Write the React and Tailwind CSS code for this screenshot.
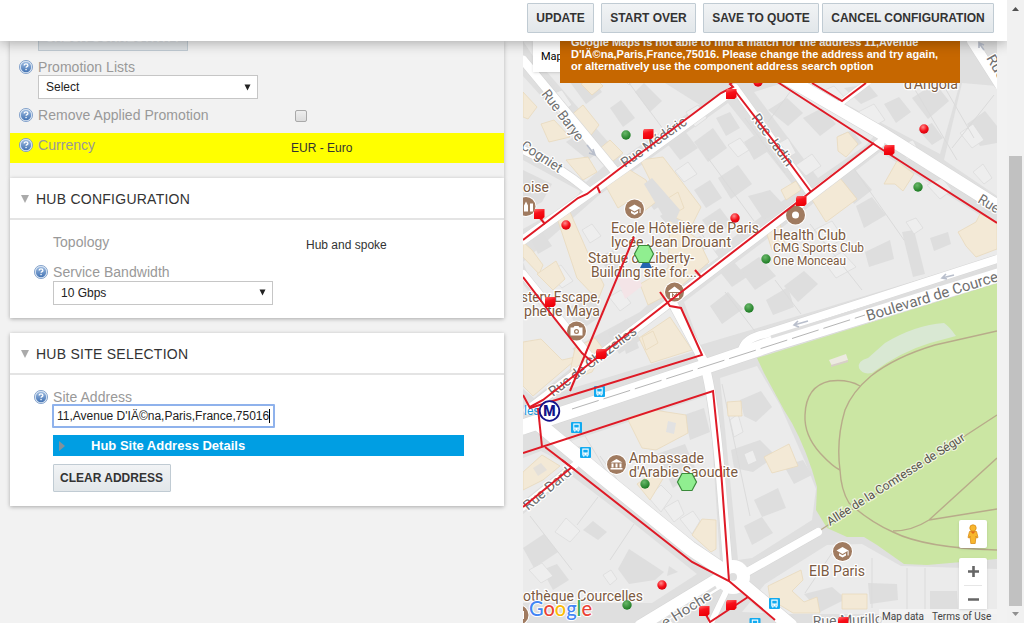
import React from "react";

/* ---------- form pieces ---------- */

function Help({ className = "" }) {
  return (
    <svg viewBox="0 0 14 14" className={"h-[14px] w-[14px] shrink-0 " + className}>
      <defs>
        <linearGradient id="help" x1="0" y1="0" x2="0" y2="1">
          <stop offset="0" stopColor="#9dbbe0" />
          <stop offset="1" stopColor="#4373b4" />
        </linearGradient>
      </defs>
      <circle cx="7" cy="7" r="6.6" fill="#dbe6f3" stroke="#7396c4" strokeWidth="0.8" />
      <circle cx="7" cy="7" r="5.200" fill="url(#help)" />
      <path d="M5.200 5.600C5.200 4.400 6 3.900 7 3.900s1.900 .5 1.900 1.500c0 1.200-1.800 1.200-1.800 2.400" fill="none" stroke="#fff" strokeWidth="1.300" />
      <rect x="6.400" y="8.900" width="1.300" height="1.300" fill="#fff" />
    </svg>
  );
}

function Select({ value, className = "" }) {
  return (
    <div className={"flex h-6 w-[220px] items-center justify-between border border-[#c6c6c6] bg-white pl-[7px] pr-[6px] text-[12px] text-[#222] " + className}>
      <span>{value}</span>
      <svg viewBox="0 0 7 7" className="h-[7px] w-[7px]">
        <path d="M0.500 0.500h6L3.500 6.500z" fill="#222" />
      </svg>
    </div>
  );
}

function Button({ children, className = "" }) {
  return (
    <button className={"flex shrink-0 items-center justify-center whitespace-nowrap rounded-[1px] border border-[#c0cbd3] bg-linear-to-b from-[#f1f3f5] to-[#e2e7ea] text-[12px] font-bold text-[#333] " + className}>
      {children}
    </button>
  );
}

function Card({ title, className = "", children }) {
  return (
    <section className={"bg-white shadow-[0_1px_4px_rgba(0,0,0,0.3)] " + className}>
      <h2 className="flex h-[42px] items-center gap-[7px] border-b-2 border-[#e4e4e4] pl-[11px] pt-[2px] text-[14px] tracking-[0.25px] text-[#333]">
        <svg viewBox="0 0 8 8" className="h-2 w-2">
          <path d="M0 0h8L4 8z" fill="#aaa" />
        </svg>
        {title}
      </h2>
      {children}
    </section>
  );
}

/* ---------- map data ---------- */

const blocks = [
  "523,76 604,166 586,182 560,164 523,142", "523,41 598,41 700,105 622,158 533,56",
  "523,160 580,191 576,200 523,229", "598,196 728,103 797,190 668,286 640,312 560,355 523,262",
  "754,92 783,83 874,136 866,145 818,178", "806,83 960,83 940,154", "962,83 997,86 997,196 944,160",
  "880,152 997,226 997,256 818,310 700,345 684,302 801,213",
  "523,284 581,360 534,398 523,389", "602,356 668,306 698,350 553,394",
  "565,443 706,396 712,440 720,560 580,460", "523,458 541,451 568,465 523,501",
  "523,514 572,476 622,514 697,574 652,603 523,603", "720,378 757,366 780,405 806,464 816,489 812,520 752,558 738,560",
  "742,612 765,584 827,545 862,544 901,566 997,569 997,614 790,614",
];

const facets = [
  "534,86 548,78 566,98 552,108", "567,78 584,67 602,92 586,104",
  "566,142 584,130 602,150 588,160", "523,170 552,184 542,202 523,212",
  "610,108 621,100 635,118 623,127", "635,92 644,83 662,101 650,112", "640,190 660,176 674,196 654,210",
  "694,142 713,128 727,148 708,162", "718,178 738,165 752,184 731,199", "748,196 770,190 786,207 764,220",
  "660,216 678,204 690,220 673,232", "694,190 710,180 722,198 706,208", "702,220 720,208 732,224 714,236",
  "666,142 684,130 698,148 680,160", "744,142 758,133 770,150 754,160", "716,118 730,112 740,128 726,136",
  "768,110 787,98 803,113 788,126", "803,118 822,108 836,124 820,136", "838,136 852,130 862,143 848,152",
  "844,88 868,84 878,96 861,104", "884,104 899,97 911,112 896,123", "912,98 935,83 949,101 928,119",
  "967,124 985,111 997,126 997,143 980,146", "918,130 932,123 943,138 932,145",
  "838,178 855,170 872,190 854,204", "856,206 872,197 886,215 864,228", "902,232 914,230 925,274 913,277",
  "930,238 948,232 951,244 934,251", "865,252 890,240 894,259 869,267", "784,286 804,271 818,284 798,302",
  "740,270 759,257 776,276 755,290", "766,300 788,287 794,307 773,315", "710,306 728,292 743,309 722,324",
  "720,272 734,262 747,277 732,287", "608,333 626,319 641,340 619,354", "623,342 636,339 639,348 626,354",
  "529,236 540,228 552,246 538,254", "570,252 583,246 594,264 580,272", "526,354 541,341 554,358 536,370",
  "568,308 590,296 604,314 578,332", "600,256 613,250 621,270 610,278", "682,246 700,236 712,252 692,264",
  "567,450 580,446 582,452 574,458", "657,454 685,444 697,472 673,488", "684,415 704,408 710,432 690,440",
  "618,569 629,549 664,572 655,580 629,584", "583,530 593,521 607,532 598,540", "523,548 544,534 558,552 534,568",
  "542,570 557,564 569,580 553,590", "669,566 678,572 667,576",
  "740,400 761,391 772,407 756,422 744,416", "731,450 760,440 776,456 753,472 734,468", "754,500 778,488 786,508 762,517",
  "744,526 762,517 773,533 752,545", "784,466 803,460 812,475 794,484", "804,594 832,587 846,599 820,612",
  "868,583 897,584 898,600 870,604", "930,591 957,591 958,609 930,609",
];

const pale = [
  "546,96 562,90 572,105 558,114", "618,74 628,68 637,78 629,85", "686,112 698,105 707,118 695,127",
  "728,145 740,138 749,150 738,157", "774,146 788,138 796,153 784,160", "796,165 812,154 821,166 806,176",
  "820,92 834,86 845,98 832,104", "858,112 874,104 885,120 871,128", "897,146 913,140 920,153 908,160",
  "927,185 942,178 952,190 940,199", "906,222 916,218 923,228 914,234",
  "960,133 973,124 984,140 972,148", "973,172 983,164 992,178 984,184", "814,230 832,221 844,239 827,247",
  "824,262 842,252 856,267 836,278", "548,272 561,265 573,281 562,288", "582,230 592,224 601,236 590,243",
  "609,297 621,290 631,303 620,311", "700,252 711,246 719,257 708,265", "675,171 688,162 697,174 684,182",
  "555,532 566,518 580,531 570,542", "529,570 542,563 553,576 541,583",
  "603,575 611,570 617,579 610,585", "648,497 661,485 672,496 661,512", "664,508 678,500 684,514 674,522",
  "680,519 693,511 700,521 692,534", "730,420 738,414 743,432 734,437", "744,454 753,450 757,461 748,465",
];

const cream = [
  "523,92 537,107 528,119 523,117", "541,124 554,120 570,137 549,142", "568,118 583,105 599,125 588,139",
  "598,150 610,140 623,153 607,166", "581,84 593,76 603,86 592,95", "566,160 588,157 597,172 583,180",
  "604,183 625,167 646,180 656,202 643,212 632,199 618,208", "640,160 663,157 701,207 692,225 676,218 650,180",
  "670,220 698,239 709,262 675,291 648,305 640,284 668,268", "557,218 570,212 587,251 604,285 598,300 577,278",
  "523,242 532,250 543,265 539,274 523,257", "537,274 556,261 565,279 553,290", "523,342 541,339 562,360 580,356 533,396 523,386",
  "575,348 595,338 604,350 592,372 568,381", "639,338 670,317 692,350 651,363", "642,337 653,331 658,343 646,350",
  "811,198 840,178 857,199 826,222", "884,184 897,161 914,174 903,191 895,184", "837,137 848,132 858,144 846,157 838,151",
  "958,232 976,222 980,214 997,222 997,249 976,257 966,246",
  "765,228 779,220 785,244 772,250", "781,190 796,181 801,190 786,200", "627,418 654,410 686,415 688,433 656,450 642,448",
  "727,402 741,401 742,416 728,416", "523,472 542,455 560,466 543,480 523,490", "637,484 656,470 664,477 650,500",
  "692,535 702,519 716,520 716,549 711,552", "764,457 789,444 798,466 772,473", "768,586 801,570 803,580 792,591 804,602 817,597 820,613 793,613 770,599",
  "842,594 867,594 867,609 842,609", "665,200 678,192 684,208 672,215",
];

const roads = [
  ["M523 60L614 170", 9], ["M523 150Q556 164 590 192", 8], ["M523 240L632 163L733 90", 9], ["M735 88L811 194", 8],
  ["M528 410L880 143", 9], ["M745 54L831 104L881 133L997 206", 13], ["M842 102L868 82", 6], ["M972 41L1000 85", 10],
  ["M523 274L594 362", 8], ["M523 427L707 366L775 343L997 275", 15], ["M742 350Q745 338 765 334L997 259", 8],
  ["M672 302L704 362Q714 400 720 470L729 580", 9], ["M540 425L594 470L690 548L733 577L790 625", 14],
  ["M523 507L575 465", 7], ["M642 627L728 575", 16], ["M740 576L818 532", 8], ["M733 577L710 625", 6],
];

const red = [
  "523,240 578,198 587,194 618,170 721,93 733,87 730,84 735,80", "597,186 600,193", "740,60 779,83 914,170 997,223",
  "735,91 775,143 811,192", "812,83 842,101 866,83", "530,407 543,400 658,310 874,143", "634,237 570,391",
  "523,277 548,310 582,353 592,362", "523,395 530,408 702,355 681,308 670,306 660,292", "695,270 701,277",
  "538,408 542,447", "523,453 713,391 721,470 729,581", "545,447 575,470", "562,460 692,562 729,581 775,620",
  "523,507 572,467", "748,597 710,622 705,613", "540,218 545,224", "800,201 804,199",
];

const greenDots = [[626, 135], [918, 187], [766, 259], [749, 308], [645, 484], [627, 605]];
const redDots = [[566, 225], [735, 218], [924, 129], [662, 585], [758, 82]];
const redSquares = [[648, 134], [731, 94], [539, 214], [550, 302], [601, 354], [801, 201], [889, 150], [704, 611], [731, 605], [843, 622]];

const labels = [
  [523, 192, "oise", 26, 14],
  [611, 233, "Ecole Hôtelière de Paris", 148, 14], [611, 247, "lycée Jean Drouant", 120, 14],
  [588, 263, "Statue of Liberty-", 106, 14], [591, 277, "Building site for...", 106, 14],
  [521, 302, "stery Escape,", 79, 14], [524, 316, "phetie Maya", 76, 14],
  [773, 240, "Health Club", 73, 14], [773, 252, "CMG Sports Club", 91, 12], [773, 265, "One Monceau", 73, 12],
  [629, 463, "Ambassade", 75, 14], [629, 477, "d'Arabie Saoudite", 109, 14],
  [809, 576, "EIB Paris", 56, 14], [523, 601, "othèque Courcelles", 120, 14], [904, 89, "d'Angola", 54, 14],
];

const streets = [
  [541, 94, "Rue Barye", 60, 14, 53], [520, 148, "Cogniet", 46, 14, 33], [625, 168, "Rue Médéric", 77, 14, -35],
  [751, 118, "Rue Jadin", 61, 14, 54], [553, 397, "Rue de Chazelles", 106, 14, -37], [977, 202, "Rue de", 40, 14, 31],
  [868, 321, "Boulevard de Cource", 137, 15, -17], [986, 58, "Rue", 26, 14, 60], [528, 511, "Rue Dard", 58, 14, -40],
  [665, 628, "e Hoche", 56, 14, -32], [813, 626, "Rue Murillo", 70, 14, -2],
];

function Poi({ x, y, children }) {
  return (
    <g transform={`translate(${x} ${y})`}>
      <circle r="10.500" fill="#fff" />
      <circle r="9.500" fill="#a07b60" />
      {children}
    </g>
  );
}

function Cap() {
  return (
    <>
      <path d="M-6-1L0-4.500L6-1L0 2.500z" fill="#fff" />
      <path d="M-3.500 1.700L0 3.700L3.500 1.700V4L0 6L-3.500 4z" fill="#fff" />
      <path d="M5.600-1V4" stroke="#fff" />
    </>
  );
}

function Bus({ x, y }) {
  return (
    <g transform={`translate(${x} ${y})`}>
      <rect x="-5.500" y="-5.500" width="11" height="11" rx="1" fill="#11aaf0" />
      <path d="M-3.200-4h6.400V3h-1v1.300h-1V3h-2.400v1.300h-1V3h-1z" fill="#fff" />
      <rect x="-2.200" y="-2.800" width="4.400" height="2.800" fill="#11aaf0" />
      <circle cx="-1.500" cy="1.600" r=".6" fill="#11aaf0" />
      <circle cx="1.500" cy="1.600" r=".6" fill="#11aaf0" />
    </g>
  );
}

function CityMap() {
  return (
    <svg viewBox="523 41 474 582" className="block h-[582px] w-[474px]" fontFamily="Roboto, sans-serif">
      <defs>
        <radialGradient id="gDot" cx=".4" cy=".3" r=".7"><stop offset="0" stopColor="#69b869" /><stop offset="1" stopColor="#1c7a22" /></radialGradient>
        <radialGradient id="rDot" cx=".4" cy=".3" r=".7"><stop offset="0" stopColor="#ff8c8c" /><stop offset=".6" stopColor="#f5101a" /><stop offset="1" stopColor="#d8000c" /></radialGradient>
        <linearGradient id="rSq" x1="0" y1="0" x2="0.300" y2="1"><stop offset="0" stopColor="#ff6d6d" /><stop offset=".45" stopColor="#f8101a" /><stop offset="1" stopColor="#ee0008" /></linearGradient>
      </defs>
      <rect x="523" y="41" width="474" height="582" fill="#dfdfdf" />
      {blocks.map((p) => <polygon key={p} points={p} fill="#ebebeb" />)}
      {facets.map((p) => <polygon key={p} points={p} fill="#dedede" />)}
      {pale.map((p) => <polygon key={p} points={p} fill="#eeeeee" stroke="#dcdcdc" strokeWidth=".8" />)}
      <path d="M560 104l28 33M604 49l62 84M530 516l42 54M577 525l21-28M610 560l24-36M664 180l42 60M708 158l46 63M745 118l40 55M790 92l-22 30M930 62l44 76M905 73l52 87M952 148l42-53M850 163l54 77M810 224l52 66M775 280l26 34M725 292l32 42M722 384l28 132M832 553l-27 40M872 558v50M907 568v43M925 568v43M600 456l40 55M585 436l26 43" fill="none" stroke="#dbdbdb" />
      {cream.map((p) => <polygon key={p} points={p} fill="#f3e9d6" stroke="#e8d9bc" strokeWidth=".8" />)}
      <polygon points="644,184 652,178 680,210 674,224 662,214" fill="#dedede" />
      <polygon points="668,421 676,423 674,434 666,432" fill="#e2e2e2" />
      <polygon points="617,278 636,270 642,286 625,299" fill="#f4e4e7" />
      <polygon points="533,468 541,463 547,470 538,476" fill="#e4e0da" />

      <path d="M757 358L997 283V559L927 565L904 564L877 545L864 537H847L827 528L816 510L817 487L812 470Q800 434 784 410L764 373z" fill="#cbe6a3" />
      <path d="M859 368Q857 361 868 358L885 343Q915 325 944 323Q949 326 956 336L930 343Q900 352 872 373Q862 375 859 368z" fill="#d9e8d3" />
      <path d="M829 360l17-6 2 6-16 6z" fill="#eceae0" /><path d="M831 367l17-5v-2l-17 5z" fill="#d8cfc8" />
      <g fill="none" stroke="#b8ab8a" strokeWidth="1.400">
        <path d="M997 331L935 345Q895 357 871 376Q852 392 845 410Q836 440 840 470Q841 490 849 503Q870 522 893 532Q925 548 997 550" />
        <path d="M860 386Q848 379 830 381Q806 386 805 415Q804 435 820 453Q833 467 840 470" />
        <path d="M819 531L997 415M997 458L929 520Q912 531 893 531M929 520L997 509" />
      </g>

      <g fill="none" stroke="#d6d6d6">{roads.map(([d, w]) => <path key={d} d={d} strokeWidth={w + 1} />)}</g>
      <circle cx="733" cy="577" r="17" fill="#fff" />
      <g fill="none" stroke="#fff" strokeLinecap="round">{roads.map(([d, w]) => <path key={d} d={d} strokeWidth={w} />)}</g>
      <circle cx="733" cy="577" r="4" fill="#dedede" />
      <path d="M648 630L716 587M771 337L997 267" stroke="#dedede" strokeWidth="3" />
      <path d="M572 409L775 344L865 315" fill="none" stroke="#b5b5b5" strokeDasharray="28 5" />
      <path d="M587 145l7 9m-1-5l2 6-6-2M808 321l-14 4m4-4l-4 4 5 2M954 275l-12 3m4-4l-4 4 5 1M984 50l-5-7m0 5v-5l5 2" fill="none" stroke="#b9bfcc" strokeWidth="1.600" />

      <g fontSize="14" fill="#6f6f6f" stroke="#fff" strokeWidth="2.500" paintOrder="stroke" strokeLinejoin="round">
        {streets.map(([x, y, t, w, s, a]) => (
          <text key={t + x} fontSize={s} textLength={w} lengthAdjust="spacingAndGlyphs" transform={`translate(${x} ${y}) rotate(${a})`}>{t}</text>
        ))}
      </g>
      <text transform="translate(830 526) rotate(-32.500)" fontSize="12" textLength="161" lengthAdjust="spacingAndGlyphs" fill="#55504a" stroke="#eef5df" strokeWidth="2.500" paintOrder="stroke">Allée de la Comtesse de Ségur</text>
      <text x="524" y="415" fontSize="12" fill="#1a9ae0">les</text>

      <Poi x={634.500} y={209}><Cap /></Poi>
      <Poi x={842.500} y={551.500}><Cap /></Poi>
      <Poi x={795.500} y={215}><circle r="3.500" fill="#fff" /></Poi>
      <Poi x={674.500} y={292}><path d="M-6-1L0-5.500L6-1V0H-6zM-4.500 1h9v5h-9z" fill="#fff" /><path d="M-2 5V1.500L0 4L2 1.500V5" fill="none" stroke="#a07b60" /></Poi>
      <Poi x={526} y={206.500}><path d="M-2 5V-1l2-4 2 4v6zM4-3h3v8h-3z" fill="#fff" /></Poi>
      <Poi x={576.500} y={331}><path d="M-6-3.500h3l1-1.500h4l1 1.500h3v8h-12z" fill="#fff" /><circle cx="0" cy=".5" r="2.500" fill="#a07b60" /><circle cx="0" cy=".5" r="1.200" fill="#fff" /></Poi>
      <Poi x={616.500} y={464.500}><path d="M-6-2L0-5.500L6-2zM-6 3.500h12v1.500h-12zM-5-1h2v4h-2zM-1-1h2v4h-2zM3-1h2v4h-2z" fill="#fff" /></Poi>
      <Poi x={519} y={615}><path d="M2-4h3v8h-3z" fill="#fff" /></Poi>

      <g fill="#7c5a41" stroke="#fff" strokeWidth="2.500" strokeLinejoin="round" paintOrder="stroke">
        {labels.map(([x, y, t, w, s]) => (
          <text key={t} x={x} y={y} fontSize={s} textLength={w} lengthAdjust="spacingAndGlyphs">{t}</text>
        ))}
      </g>

      <Bus x={599.500} y={391.500} /><Bus x={576.500} y={427.500} /><Bus x={585.500} y={452.500} /><Bus x={774.500} y={603.500} /><Bus x={755} y={623.500} />
      <path d="M640 268l3-6h6l3 6z" fill="#2465b0" />
      <g fill="none" stroke="#df1a26" strokeWidth="2">{red.map((p) => <polyline key={p} points={p} />)}</g>
      <circle cx="549.500" cy="411" r="9.800" fill="#fff" stroke="#14148a" strokeWidth="1.800" />
      <text x="549.500" y="416" textAnchor="middle" fontSize="14" fontWeight="900" fill="#14148a">M</text>
      {greenDots.map(([x, y]) => <circle key={x} cx={x} cy={y} r="4.700" fill="url(#gDot)" />)}
      {redDots.map(([x, y]) => <circle key={x} cx={x} cy={y} r="4.700" fill="url(#rDot)" />)}
      {redSquares.map(([x, y]) => <path key={x} d={`M${x - 4} ${y - 5}h9.500v8l-2 2h-8.500v-8z`} fill="url(#rSq)" />)}
      {[[644, 254], [687, 482]].map(([x, y]) => (
        <path key={x} transform={`translate(${x} ${y})`} d="M-9.500 0L-5-8.500H5L9.500 0L5 8.500H-5z" fill="#90ee90" stroke="#3a8a3a" strokeWidth="1.200" />
      ))}

      <g fontSize="21" fontFamily="Lato, sans-serif" stroke="#fff" strokeWidth="2" paintOrder="stroke" fontWeight="500">
        <text x="529" y="616" textLength="63" lengthAdjust="spacingAndGlyphs">
          <tspan fill="#4285f4">G</tspan><tspan fill="#ea4335">o</tspan><tspan fill="#fbbc05">o</tspan><tspan fill="#4285f4">g</tspan><tspan fill="#34a853">l</tspan><tspan fill="#ea4335">e</tspan>
        </text>
      </g>
    </svg>
  );
}

function MapPane() {
  return (
    <div className="relative w-[474px] shrink-0 overflow-hidden">
      <CityMap />
      <div className="absolute left-[10px] top-0 flex h-[31px] w-12 items-center bg-white pl-2 pt-[2px] font-[Roboto,sans-serif] text-[11px] text-black shadow">Map</div>
      <div className="absolute left-[37px] top-0 h-[42px] w-[400px] bg-[#c66700] pl-[11px] text-[11px] font-bold leading-[12px] text-white">
        <div className="-mt-[5px] whitespace-nowrap">
          Google Maps is not able to find a match for the address 11,Avenue<br />
          D'IÄ©na,Paris,France,75016. Please change the address and try again,<br />
          or alternatively use the component address search option
        </div>
      </div>
      <div className="absolute bottom-0 right-0 flex h-[14px] w-[118px] items-center gap-2 bg-[#f5f5f5]/80 pl-[3px] font-[Roboto,sans-serif] text-[10px] text-[#444]">
        <span>Map data</span><span>Terms of Use</span>
      </div>
      <div className="absolute bottom-[75px] right-[10px] flex h-7 w-7 items-center justify-center rounded-[2px] bg-white shadow">
        <svg viewBox="0 0 14 20" className="h-5 w-[14px]">
          <circle cx="7" cy="4" r="3.200" fill="#f8b62d" stroke="#d98d16" strokeWidth=".8" />
          <path d="M3.500 7.500h7l1.500 6-1.500.5-.5-2-.8 7.500H4.800L4 12l-.5 2-1.500-.5z" fill="#f8b62d" stroke="#d98d16" strokeWidth=".8" />
          <path d="M4.500 7.500h5L7 10z" fill="#e06a1c" />
        </svg>
      </div>
      <div className="absolute bottom-[14px] right-[10px] h-[51px] w-7 rounded-t-[2px] bg-white shadow">
        <svg viewBox="0 0 28 51" className="h-[51px] w-7">
          <path d="M9 13.500h11M14.500 8v11M9 41.500h11" stroke="#666" strokeWidth="2.600" />
          <path d="M5 27.500h18" stroke="#e6e6e6" />
        </svg>
      </div>
    </div>
  );
}

function Label({ children }) {
  return <span className="text-[14px] leading-4 tracking-[0.04px] text-[#999]">{children}</span>;
}

function FormPane() {
  return (
    <div className="w-[523px] shrink-0 pl-[10px]">
      <div className="w-[494px]">
        <section className="h-[137px] bg-[#f2f2f2] shadow-[0_1px_4px_rgba(0,0,0,0.25)]">
          <div className="ml-7 h-[10px] w-[150px] overflow-hidden rounded-b-[1px] border border-t-0 border-[#c0cbd3] bg-[#dde1e4]">
            <div className="-mt-[10px] text-center text-[12px] font-bold leading-[14px] text-[#f1f3f4]">CHECK CONNECTIVITY</div>
          </div>
          <div className="mt-2 flex items-center gap-[5px] pl-[9px]"><Help /><Label>Promotion Lists</Label></div>
          <Select value="Select" className="ml-7" />
          <div className="mt-2 flex h-4 items-center gap-[5px] pl-[9px]">
            <Help /><Label>Remove Applied Promotion</Label>
            <span className="ml-[81px] h-3 w-3 translate-y-px rounded-[2px] border border-[#a9a9a9] bg-linear-to-b from-[#eee] to-[#dcdcdc]" />
          </div>
          <div className="mt-[10px] flex h-[30px] items-center gap-[5px] bg-[#ffff00] pl-[9px]">
            <Help className="-mt-[6px]" />
            <div className="-mt-[6px] w-[248px]"><Label>Currency</Label></div>
            <span className="text-[12px] text-[#333]">EUR - Euro</span>
          </div>
        </section>

        <Card title="HUB CONFIGURATION" className="h-[140px]">
          <div className="flex h-[44px] items-center pl-[43px] pt-1">
            <div className="-mt-[4px] w-[253px]"><Label>Topology</Label></div>
            <span className="pt-px text-[12px] text-[#333]">Hub and spoke</span>
          </div>
          <div className="flex h-[18px] items-start gap-[5px] pl-6 pt-px"><Help /><span className="-mt-px flex"><Label>Service Bandwidth</Label></span></div>
          <Select value="10 Gbps" className="-mt-px ml-[43px] pb-px" />
        </Card>

        <Card title="HUB SITE SELECTION" className="mt-[15px] h-[173px]">
          <div className="mt-[14px] flex items-center gap-[5px] pl-6"><Help /><Label>Site Address</Label></div>
          <div className="-mt-px ml-[42px] flex h-[24px] w-[223px] items-center rounded-[1px] border-2 border-[#8fb2ec] bg-white pl-[3px] text-[12px] text-[#222]">
            <span className="border-r border-black leading-[14px]">11,Avenue D'IÄ©na,Paris,France,75016</span>
          </div>
          <div className="ml-[43px] mt-[7px] flex h-[21px] w-[411px] items-center bg-[#009ee3] pl-[6px] text-[13px] font-bold text-white">
            <svg viewBox="0 0 6 10" className="mr-[26px] h-[10px] w-[6px]"><path d="M0 0l6 5-6 5z" fill="#83919b" /></svg>
            Hub Site Address Details
          </div>
          <Button className="ml-[43px] mt-2 h-7 w-[118px] pr-px">CLEAR ADDRESS</Button>
        </Card>
      </div>
    </div>
  );
}

export default function App() {
  return (
    <div className="flex h-[623px] w-[1024px] overflow-hidden bg-[#f2f2f2] font-['Liberation_Sans',Arial,sans-serif]">
      <div className="flex w-[1007px] shrink-0 flex-col">
        <header className="relative z-10 flex h-[41px] shrink-0 items-start bg-white pl-[527px] pt-[3px] shadow-[0_2px_12px_rgba(0,0,0,0.3)]">
          <Button className="h-[30px] w-[67px]">UPDATE</Button>
          <Button className="ml-[7px] h-[30px] w-[95px]">START OVER</Button>
          <Button className="ml-[7px] h-[30px] w-[116px]">SAVE TO QUOTE</Button>
          <Button className="ml-[3px] h-[30px] w-[172px]">CANCEL CONFIGURATION</Button>
        </header>
        <main className="flex h-[582px]">
          <FormPane />
          <MapPane />
        </main>
      </div>
      <aside className="z-20 flex w-[17px] shrink-0 flex-col items-center bg-[#f1f1f1]">
        <svg viewBox="0 0 17 17" className="h-[17px] w-[17px]"><path d="M5 11h7L8.500 7z" fill="#505050" /></svg>
        <div className="mt-[139px] h-[450px] w-[13px] bg-[#c1c1c1]" />
        <svg viewBox="0 0 17 17" className="h-[17px] w-[17px]"><path d="M5 6h7L8.500 10z" fill="#909090" /></svg>
      </aside>
    </div>
  );
}
